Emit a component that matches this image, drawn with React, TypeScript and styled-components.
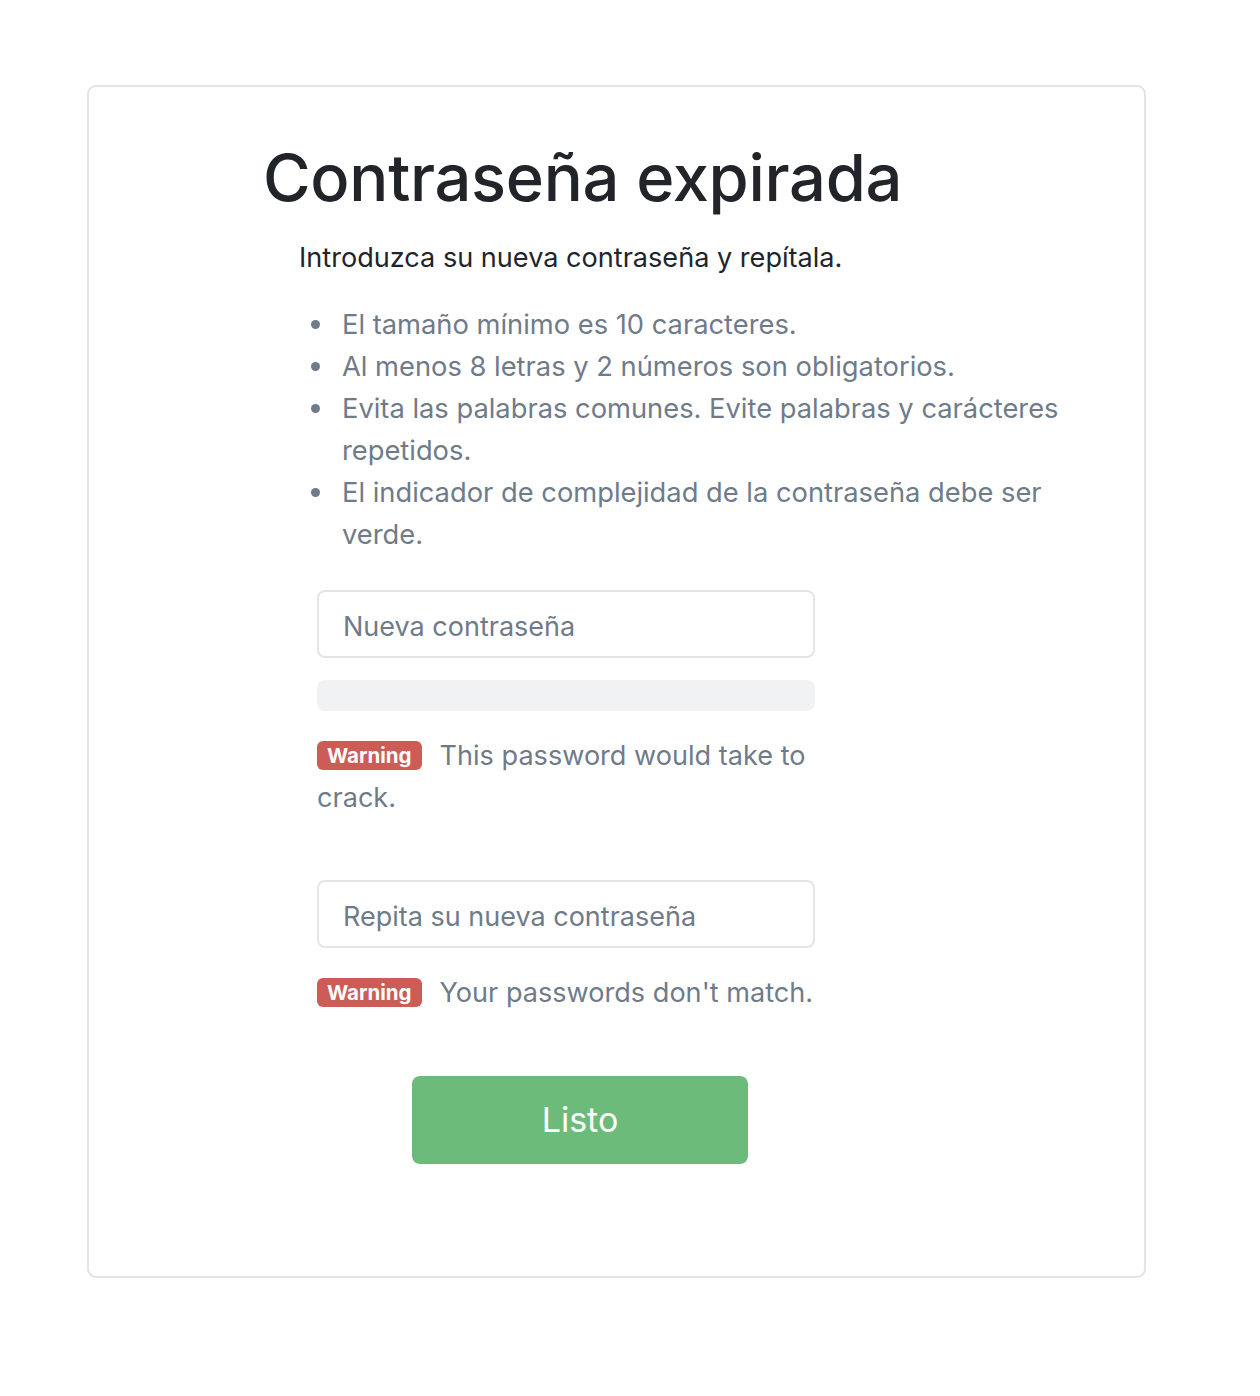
import React from "react";
import styled, { createGlobalStyle } from "styled-components";

const Global = createGlobalStyle`
  html, body { margin: 0; padding: 0; background: #fff; }
  body { font-family: Inter, "Noto Sans", sans-serif; }
  * { box-sizing: border-box; }
`;

const Page = styled.div`
  padding: 85px 114px 118px 87px;
`;

const Card = styled.div`
  border: 2px solid #e3e4e6;
  border-radius: 9px;
  padding: 52px 0 112px 174px;
`;

const Title = styled.h1`
  margin: 0;
  font-size: 65px;
  font-weight: 500;
  color: #212529;
  line-height: 1.2;
  letter-spacing: -0.3px;
`;

const Lead = styled.p`
  margin: 21px 0 0 36px;
  font-size: 27.1px;
  color: #212529;
  line-height: 1.5;
`;

const Rules = styled.ul`
  margin: 25px 0 0 0;
  padding-left: 79px;
  max-width: 820px;
  list-style: none;
  font-size: 27.3px;
  line-height: 42px;
  color: #6f7b89;
`;

const Rule = styled.li`
  position: relative;
  &::before {
    content: "";
    position: absolute;
    left: -31px;
    top: 16px;
    width: 9px;
    height: 9px;
    border-radius: 50%;
    background: #6f7b89;
  }
`;

const Form = styled.div`
  margin: 34px 0 0 54px;
  width: 498px;
  display: flex;
  flex-direction: column;
`;

const Input = styled.input`
  width: 100%;
  height: 68px;
  border: 2px solid #e3e5e9;
  border-radius: 8px;
  padding: 6px 24px 0;
  font-family: inherit;
  font-size: 27px;
  color: #212529;
  &::placeholder { color: #6f7b89; }
  outline: none;
`;

const Meter = styled.div`
  margin-top: 22px;
  height: 31px;
  border-radius: 8px;
  background: #f1f2f4;
`;

const Feedback = styled.p<{ $top: number }>`
  margin: ${(p) => p.$top}px -30px 0 0;
  font-size: 27.1px;
  line-height: 42px;
  color: #6f7b89;
`;

const Badge = styled.span`
  display: inline-block;
  background: #cd5c56;
  color: #fff;
  font-weight: 700;
  font-size: 20.5px;
  line-height: 29px;
  padding: 0 10px;
  border-radius: 6px;
  margin-right: 18px;
  vertical-align: 2px;
`;

const Spacer = styled.div`
  height: 61px;
`;

const Button = styled.button`
  margin: 62px 0 0 149px;
  width: 336px;
  height: 88px;
  border: none;
  border-radius: 8px;
  background: #6dbb7a;
  color: #fff;
  font-family: inherit;
  font-size: 34px;
  font-weight: 400;
`;

export default function App() {
  return (
    <>
      <Global />
      <Page>
        <Card>
          <Title>Contraseña expirada</Title>
          <Lead>Introduzca su nueva contraseña y repítala.</Lead>
          <Rules>
            <Rule>El tamaño mínimo es 10 caracteres.</Rule>
            <Rule>Al menos 8 letras y 2 números son obligatorios.</Rule>
            <Rule>Evita las palabras comunes. Evite palabras y carácteres repetidos.</Rule>
            <Rule>El indicador de complejidad de la contraseña debe ser verde.</Rule>
          </Rules>
          <Form>
            <Input type="password" placeholder="Nueva contraseña" />
            <Meter />
            <Feedback $top={24}>
              <Badge>Warning</Badge>This password would take to crack.
            </Feedback>
            <Spacer />
            <Input type="password" placeholder="Repita su nueva contraseña" />
            <Feedback $top={24}>
              <Badge>Warning</Badge>Your passwords don't match.
            </Feedback>
          </Form>
          <Button>Listo</Button>
        </Card>
      </Page>
    </>
  );
}
